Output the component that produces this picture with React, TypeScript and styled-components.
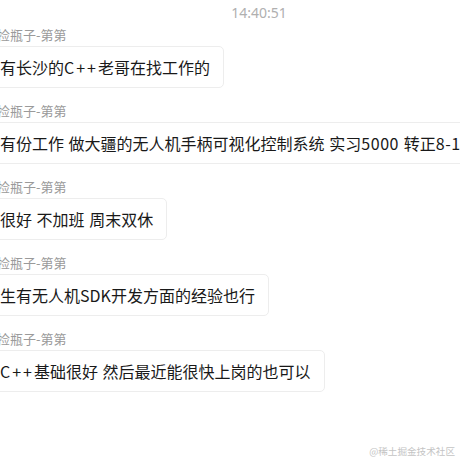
import React from "react";
import styled, { createGlobalStyle } from "styled-components";

const Global = createGlobalStyle`
  html, body { margin: 0; padding: 0; background: #ffffff; }
  body { overflow: hidden; }
`;

const Page = styled.div`
  position: relative;
  width: 460px;
  height: 460px;
  overflow: hidden;
  background: #ffffff;
  font-family: "Noto Sans CJK SC", "Noto Sans", sans-serif;
`;

const Time = styled.div`
  padding: 4px 0 0 58px;
  text-align: center;
  font-size: 14px;
  line-height: 18px;
  color: #b0b0b0;
  font-family: "Noto Sans", "Noto Sans CJK SC", sans-serif;
`;

const List = styled.div`
  display: flex;
  flex-direction: column;
  gap: 14px;
  margin: 4px 0 0 -29px;
`;

const Item = styled.div`
  display: flex;
  flex-direction: column;
  align-items: flex-start;
  gap: 2px;
`;

const Name = styled.div`
  margin-left: 26px;
  font-size: 13px;
  line-height: 18px;
  color: #9a9a9a;
  white-space: nowrap;
`;

const Bubble = styled.div<{ $indent?: number }>`
  padding: 8px 13px 8px ${(p) => 12 + (p.$indent ?? 0)}px;
  font-size: 16px;
  line-height: 24px;
  word-spacing: 1px;
  color: #191919;
  background: #ffffff;
  border: 1px solid #ededed;
  border-radius: 5px;
  white-space: nowrap;
`;

const Latin = styled.span<{ $track: number }>`
  letter-spacing: ${(p) => p.$track}px;
`;

const Mark = styled.div`
  position: absolute;
  right: 5px;
  bottom: 2px;
  font-size: 9.6px;
  line-height: 14px;
  color: #c4c4c4;
  white-space: nowrap;
`;

const CPP = <Latin $track={2}>C++</Latin>;

const messages: { content: React.ReactNode; indent?: number }[] = [
  { content: <>还有长沙的{CPP}老哥在找工作的</> },
  {
    content: (
      <>
        这有份工作 做大疆的无人机手柄可视化控制系统 实习<Latin $track={0.6}>5000</Latin> 转正
        <Latin $track={0.6}>8-12k</Latin>
      </>
    ),
  },
  { content: <>还很好 不加班 周末双休</> },
  { content: <>生有无人机SDK开发方面的经验也行</>, indent: 16 },
  { content: <>{CPP}基础很好 然后最近能很快上岗的也可以</>, indent: 16 },
];

export default function App() {
  return (
    <Page>
      <Global />
      <Time>14:40:51</Time>
      <List>
        {messages.map((m, i) => (
          <Item key={i}>
            <Name>捡瓶子-第第</Name>
            <Bubble $indent={m.indent}>{m.content}</Bubble>
          </Item>
        ))}
      </List>
      <Mark>@稀土掘金技术社区</Mark>
    </Page>
  );
}
